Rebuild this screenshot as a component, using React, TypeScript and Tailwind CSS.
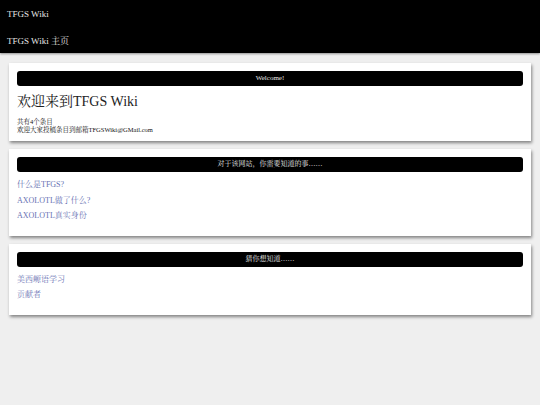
const serif = "font-['Liberation_Serif','Noto_Serif_CJK_SC','Noto_Sans_CJK_SC',serif]";

function Card({ title, children }: { title: string; children: React.ReactNode }) {
  return (
    <section className="mx-[9px] bg-white px-[8px] pt-[8px] shadow-[1px_2px_3px_rgba(0,0,0,0.45)]">
      <div className="flex h-[15px] items-center justify-center rounded-[3px] bg-black text-[7px] text-[#e8e8e8]">
        {title}
      </div>
      {children}
    </section>
  );
}

function Links({ items }: { items: string[] }) {
  return (
    <ul className="pt-[5px] pb-[12px]">
      {items.map((t) => (
        <li key={t} className="text-[8px] leading-[15.5px] text-[#6872b3]">
          <a href="#">{t}</a>
        </li>
      ))}
    </ul>
  );
}

export default function App() {
  return (
    <div className={`min-h-[405px] bg-[#efefef] ${serif}`}>
      <header className="flex h-[53px] flex-col bg-black px-[7px] text-[9px] text-[#e6e6e6] shadow-[0_1px_2px_rgba(0,0,0,0.4)]">
        <div className="flex h-[28px] items-center pt-[1px]">TFGS Wiki</div>
        <div className="flex h-[25px] items-center pt-[2px]">TFGS Wiki 主页</div>
      </header>

      <div className="flex flex-col gap-[8px] pt-[10px]">
        <Card title="Welcome!">
          <h1 className="mt-[8px] text-[14px] leading-[16px] text-[#222]">欢迎来到TFGS Wiki</h1>
          <div className="mt-[8px] pb-[7px] text-[6.5px] leading-[8px] text-[#111]">
            <p>共有4个条目</p>
            <p>欢迎大家投稿条目到邮箱TFGSWiki@GMail.com</p>
          </div>
        </Card>

        <Card title="对于该网站，你需要知道的事……">
          <Links items={["什么是TFGS?", "AXOLOTL做了什么?", "AXOLOTL真实身份"]} />
        </Card>

        <Card title="猜你想知道……">
          <Links items={["美西螈语学习", "贡献者"]} />
        </Card>
      </div>
    </div>
  );
}
